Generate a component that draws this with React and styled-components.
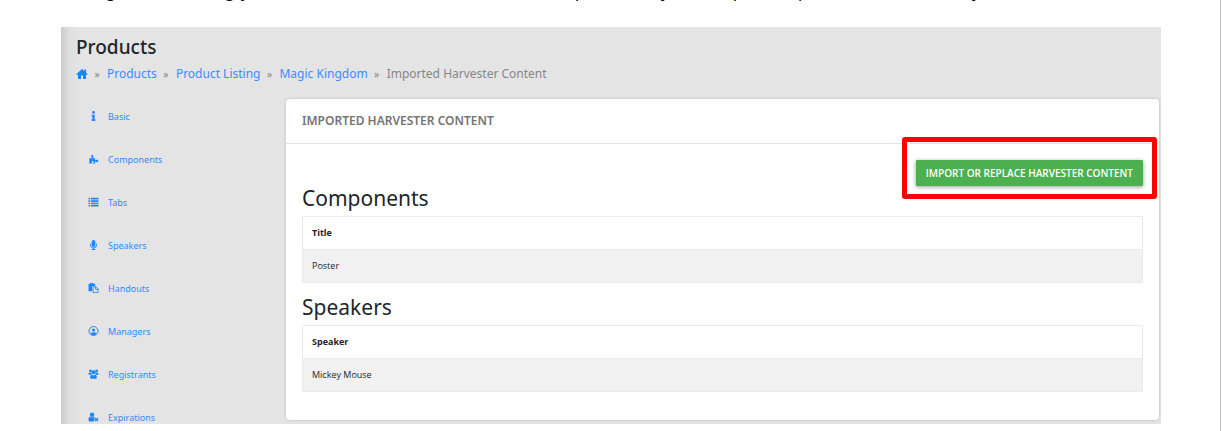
import React from "react";
import styled, { createGlobalStyle } from "styled-components";
import { FaInfo, FaMicrophone } from "react-icons/fa";

const GlobalStyle = createGlobalStyle`
  * { box-sizing: border-box; }
  body {
    margin: 0;
    background: #fff;
    color: #212529;
    font-family: "Noto Sans", "Open Sans", sans-serif;
  }
`;

const Page = styled.div`
  min-height: 100vh;
  margin-right: 1px;
  padding: 0 59px 0 61px;
  border-right: 1px solid #bdbdbd;
`;

const Intro = styled.p`
  display: grid;
  grid-template-columns: 119px 17px 333px 86px 72px 65px 174px auto;
  height: 27px;
  margin: 0;
  padding-left: 45px;
  overflow: hidden;
  color: #000;
  font-size: 16px;
  line-height: 20px;
  span { margin-top: -19px; }
`;

const Screen = styled.div`
  padding: 8px 2px 0 0;
  background: linear-gradient(to right, #cbcbcb 0, #dedede 8px, #e4e4e4 18px);
`;

const Header = styled.header`
  padding-left: 15px;
`;

const PageTitle = styled.h1`
  margin: 0;
  font-size: 19px;
  line-height: 24px;
  font-weight: 500;
`;

const Breadcrumb = styled.nav`
  display: flex;
  align-items: center;
  margin-top: 6px;
  font-size: 12px;
  line-height: 18px;
  color: #868686;
`;

const Link = styled.a`
  display: flex;
  align-items: center;
  color: #3d8bfd;
  text-decoration: none;
  svg { color: #1a86ff; }
`;

const Separator = styled.span`
  width: 19px;
  padding-right: 1px;
  text-align: center;
  font-size: 10px;
`;

const Body = styled.div`
  display: flex;
  align-items: flex-start;
  margin-top: 14px;
`;

const Sidebar = styled.nav`
  display: flex;
  flex-direction: column;
  flex: 0 0 225px;
  gap: 29px;
  padding: 12px 0 0 27px;
`;

const MenuLink = styled.a`
  display: flex;
  align-items: center;
  height: 14px;
  gap: 9px;
  color: #2b8cff;
  font-size: 9px;
  text-decoration: none;
  svg { width: 11px; height: 10px; color: #1a86ff; }
`;

const Card = styled.main`
  flex: 1;
  margin-top: 2px;
  background: #fff;
  border-radius: 4px;
  box-shadow: 0 0 2px 1px #cfcfcf;
`;

const CardTitle = styled.h2`
  margin: 0;
  padding: 0 16px;
  border-bottom: 1px solid #e4e4e4;
  color: #757575;
  font-size: 12px;
  font-weight: 600;
  line-height: 44px;
`;

const CardBody = styled.div`
  padding: 16px;
`;

const Actions = styled.div`
  display: flex;
  justify-content: flex-end;
`;

const Highlight = styled.div`
  margin: -23px -14px -13px 0;
  padding: 18px 9px 8px;
  border: 5px solid #f00;
  border-radius: 3px;
`;

const Button = styled.button`
  display: block;
  height: 26px;
  padding: 0 10px;
  border: 0;
  border-radius: 1px;
  background: #4caf50;
  box-shadow: 0 1px 4px rgba(0, 0, 0, 0.4);
  color: #fff;
  font: 600 10px "Open Sans", sans-serif;
`;

const SectionTitle = styled.h3`
  margin: 0;
  font-size: 21px;
  font-weight: 400;
  line-height: 24px;
`;

const Table = styled.table`
  width: 100%;
  margin: 6px 0 12px;
  border: 1px solid #e9ebed;
  border-collapse: collapse;
  font-family: "Open Sans", sans-serif;
  font-size: 9px;
  line-height: 12px;
  text-align: left;
  th, td { height: 33px; padding: 0 9px; border-bottom: 1px solid #e9ebed; }
  th { font-weight: 700; }
  td { background: #f1f1f1; }
`;

const Glyph = ({ children, ...rest }) => (
  <svg width="12" height="12" viewBox="0 0 12 12" fill="currentColor" aria-hidden="true" {...rest}>{children}</svg>
);

const HomeIcon = () => (
  <Glyph><path d="M6 1 .5 6v.8H2V11h3V7.5h2V11h3V6.8h1.5V6L10 4.600V1.600H8.300V3z" /></Glyph>
);
const PuzzleIcon = () => (
  <Glyph><path d="M1 5h3.200C3.500 4 3.200 3.200 3.200 2.500a1.400 1.400 0 0 1 2.800 0C6 3.300 5.500 4 5.200 5H8v2.500c1 0 1.200-.7 2.200-.7 1 0 1.600.6 1.600 1.500s-.6 1.500-1.600 1.500c-1 0-1.200-.7-2.200-.7V11.500H5.600c0-1 .6-1.300.6-2.200 0-.6-.4-1-1.100-1s-1.200.4-1.200 1c0 .9.700 1.200.7 2.200H1z" /></Glyph>
);
const ListIcon = () => (
  <Glyph><path d="M0 1h2v2H0zM3 1h9v2H3zM0 4h2v2H0zM3 4h9v2H3zM0 7h2v1.800H0zM3 7h9v1.800H3zM0 9.700h2v1.800H0zM3 9.700h9v1.800H3z" /></Glyph>
);
const PasteIcon = () => (
  <Glyph>
    <path d="M0 1h2.200V0h3.600v1H8v2.500H4.500V10H0z" />
    <path d="M5.500 4.500H9l2.500 2.500v4.500h-6z" fill="none" stroke="currentColor" />
    <path d="M8.500 4.500v3h3" fill="none" stroke="currentColor" />
  </Glyph>
);
const ManagerIcon = () => (
  <Glyph>
    <circle cx="6" cy="6" r="5.400" fill="none" stroke="currentColor" strokeWidth="1.200" />
    <circle cx="6" cy="4.800" r="1.900" />
    <path d="M2.500 9.600c.3-1.500 1.100-2.100 2-2.100.9.500 2.100.5 3 0 .9 0 1.700.6 2 2.100-2 1.800-5 1.800-7 0z" />
  </Glyph>
);
const UsersIcon = () => (
  <Glyph>
    <circle cx="2.300" cy="2.300" r="1.700" />
    <circle cx="9.700" cy="2.300" r="1.700" />
    <circle cx="6" cy="4" r="2.400" />
    <path d="M0 6.800C0 5 .4 4.200 1.200 4.200c.7.500 1.500.4 2 .2.100 1 .5 1.600 1 2.100C3.300 6.400 2.700 6.800 2.300 7H.8C.2 7 0 7 0 6.800zM12 6.800c0-1.800-.4-2.600-1.200-2.600-.7.500-1.500.4-2 .2-.1 1-.5 1.600-1 2.100.9-.1 1.500.3 1.900.5h1.500c.6 0 .8 0 .8-.2zM2 10.200c0-2.300.8-3.400 2-3.400 1.200.9 2.800.9 4 0 1.200 0 2 1.100 2 3.400 0 .9-.6 1.600-1.500 1.600h-5C2.600 11.800 2 11.100 2 10.200z" />
  </Glyph>
);
const ExpiredIcon = () => (
  <Glyph>
    <circle cx="4.300" cy="3.200" r="2.700" />
    <path d="M0 9.500C0 7 .8 5.800 2.200 5.800c1.300 1 2.900 1 4.200 0 .5 0 .9.200 1.200.6L6.500 7.500l1.300 1.400-1.500 1.500.7.900H1.500C.6 11.300 0 10.600 0 9.500z" />
    <path d="m7.800 7.200 3.600 3.800m0-3.800L7.800 11" stroke="currentColor" strokeWidth="1.400" />
  </Glyph>
);

const menu = [
  ["Basic", FaInfo],
  ["Components", PuzzleIcon],
  ["Tabs", ListIcon],
  ["Speakers", FaMicrophone],
  ["Handouts", PasteIcon],
  ["Managers", ManagerIcon],
  ["Registrants", UsersIcon],
  ["Expirations", ExpiredIcon],
];

const sections = [
  { title: "Components", column: "Title", rows: ["Poster"] },
  { title: "Speakers", column: "Speaker", rows: ["Mickey Mouse"] },
];

export default function App() {
  return (
    <Page>
      <GlobalStyle />
      <Intro aria-hidden="true">
        {[..."ggjpyppy"].map((letter, i) => <span key={i}>{letter}</span>)}
      </Intro>
      <Screen>
        <Header>
          <PageTitle>Products</PageTitle>
          <Breadcrumb aria-label="Breadcrumb">
            <Link href="#home" aria-label="Home"><HomeIcon /></Link>
            <Separator>»</Separator>
            <Link href="#products">Products</Link>
            <Separator>»</Separator>
            <Link href="#listing">Product Listing</Link>
            <Separator>»</Separator>
            <Link href="#magic-kingdom">Magic Kingdom</Link>
            <Separator>»</Separator>
            <span>Imported Harvester Content</span>
          </Breadcrumb>
        </Header>
        <Body>
          <Sidebar aria-label="Product">
            {menu.map(([label, Icon]) => (
              <MenuLink href={"#" + label.toLowerCase()} key={label}><Icon />{label}</MenuLink>
            ))}
          </Sidebar>
          <Card>
            <CardTitle>IMPORTED HARVESTER CONTENT</CardTitle>
            <CardBody>
              <Actions>
                <Highlight>
                  <Button type="button">IMPORT OR REPLACE HARVESTER CONTENT</Button>
                </Highlight>
              </Actions>
              {sections.map(({ title, column, rows }) => (
                <section key={title}>
                  <SectionTitle>{title}</SectionTitle>
                  <Table>
                    <thead><tr><th scope="col">{column}</th></tr></thead>
                    <tbody>{rows.map((row) => <tr key={row}><td>{row}</td></tr>)}</tbody>
                  </Table>
                </section>
              ))}
            </CardBody>
          </Card>
        </Body>
      </Screen>
    </Page>
  );
}
